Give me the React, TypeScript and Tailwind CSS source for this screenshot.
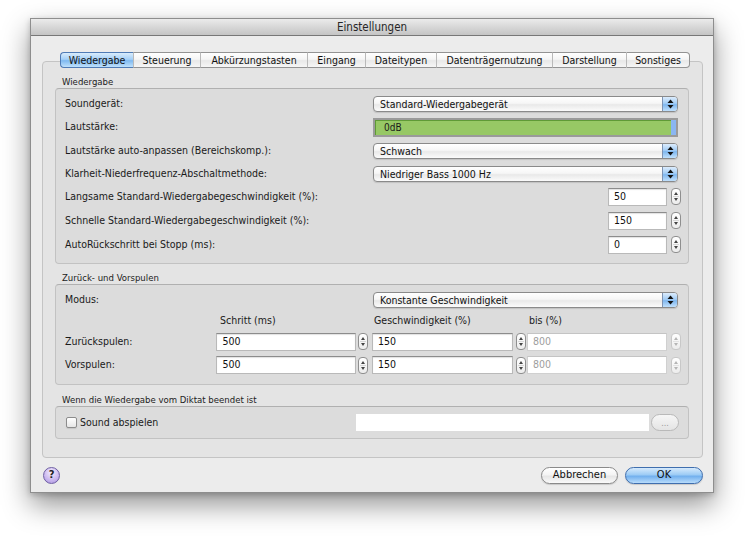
import React from "react";

const FONT = "[font-family:'DejaVu_Sans_Condensed','DejaVu_Sans',sans-serif]";

function PopArrows() {
  return (
    <svg width="7" height="10" viewBox="0 0 7 10">
      <polygon points="3.5,0.5 6.5,4 0.5,4" fill="#111" />
      <polygon points="0.5,6 6.5,6 3.5,9.5" fill="#111" />
    </svg>
  );
}

function Popup({ text }: { text: string }) {
  return (
    <div className="mr-[3px] flex h-[16px] w-[305px] overflow-hidden rounded-[4px] border border-[#8a8a8a] bg-[linear-gradient(to_bottom,#ffffff_0%,#f6f6f6_45%,#e9e9e9_55%,#fbfbfb_100%)] shadow-[0_1px_1px_rgba(0,0,0,0.12)]">
      <div className="flex-1 pl-[6px] text-[10.5px] leading-[14px] text-[#111]">{text}</div>
      <div className="flex w-[15px] items-center justify-center border-l border-[#7d93b3] bg-[linear-gradient(to_bottom,#dcecfc_0%,#a3cdf6_45%,#7fb7ef_55%,#c0e0fc_100%)]">
        <PopArrows />
      </div>
    </div>
  );
}

function Stepper({ disabled = false }: { disabled?: boolean }) {
  const c = disabled ? "#b5b5b5" : "#444";
  return (
    <div
      className={`flex h-[17px] w-[10px] items-center justify-center rounded-[4px] border bg-[linear-gradient(to_bottom,#ffffff,#ececec)] ${
        disabled ? "border-[#c8c8c8]" : "border-[#8f8f8f]"
      }`}
    >
      <svg width="8" height="15" viewBox="0 0 8 15">
        <polygon points="4,3 6,6 2,6" fill={c} />
        <line x1="1" y1="7.5" x2="7" y2="7.5" stroke={disabled ? "#dedede" : "#cfcfcf"} strokeWidth="0.8" />
        <polygon points="2,9 6,9 4,12" fill={c} />
      </svg>
    </div>
  );
}

function Field({ value, w, disabled = false }: { value: string; w: string; disabled?: boolean }) {
  return (
    <div
      className={`flex h-[18px] ${w} items-center border border-[#b9b9b9] border-t-[#8c8c8c] bg-white pl-[5px] text-[10.5px] shadow-[inset_0_1px_1px_rgba(0,0,0,0.12)] ${
        disabled ? "border-[#d0d0d0] border-t-[#c4c4c4] text-[#9d9d9d] shadow-none" : "text-[#111]"
      }`}
    >
      {value}
    </div>
  );
}

function Row({ label, children, h }: { label: string; children: React.ReactNode; h: string }) {
  return (
    <div className={`flex ${h} items-center justify-between`}>
      <div className="text-[10.5px] text-[#1a1a1a]">{label}</div>
      {children}
    </div>
  );
}

function NumRow({ label, value, h }: { label: string; value: string; h: string }) {
  return (
    <Row label={label} h={h}>
      <div className="flex items-center gap-[4px]">
        <Field value={value} w="w-[59px]" />
        <Stepper />
      </div>
    </Row>
  );
}

const tabs: { t: string; w: string }[] = [
  { t: "Wiedergabe", w: "w-[73px]" },
  { t: "Steuerung", w: "w-[67px]" },
  { t: "Abkürzungstasten", w: "w-[107px]" },
  { t: "Eingang", w: "w-[58px]" },
  { t: "Dateitypen", w: "w-[71px]" },
  { t: "Datenträgernutzung", w: "w-[116px]" },
  { t: "Darstellung", w: "w-[74px]" },
  { t: "Sonstiges", w: "w-[64px]" },
];

function SectionLabel({ text }: { text: string }) {
  return <div className="h-[12px] pl-[7px] text-[9.5px] leading-[12px] text-[#222]">{text}</div>;
}

export default function App() {
  return (
    <div className={`h-[536px] w-[745px] bg-white pl-[30px] pt-[18px] ${FONT}`}>
      <div className="flex h-[475px] w-[684px] flex-col border border-[#8e8e8e] bg-[#ececec] shadow-[0_12px_26px_rgba(0,0,0,0.42),0_2px_6px_rgba(0,0,0,0.2)]">
        {/* Title bar */}
        <div className="h-[17px] border-b border-[#777] bg-[linear-gradient(to_bottom,#ebebeb,#c4c4c4)] text-center text-[11.5px] leading-[16px] text-[#262626]">
          Einstellungen
        </div>

        {/* Body */}
        <div className="flex flex-1 flex-col pl-[11px] pr-[10px] pt-[16px]">
          {/* Tabs */}
          <div className="relative z-10 flex h-[16px] pl-[18px]">
            {tabs.map((tab, i) => {
              const sel = i === 0;
              const first = i === 0;
              const last = i === tabs.length - 1;
              return (
                <div
                  key={tab.t}
                  className={`flex ${tab.w} items-center justify-center border-y text-[10.5px] leading-[14px] text-[#111] ${
                    sel
                      ? "border-[#4f7bb5] bg-[linear-gradient(to_bottom,#d9ecfc_0%,#a5d0f7_45%,#7fb9f0_55%,#bfe1fc_100%)]"
                      : "border-[#939393] bg-[linear-gradient(to_bottom,#ffffff_0%,#f5f5f5_45%,#e8e8e8_55%,#f6f6f6_100%)]"
                  } ${first ? "rounded-l-[4px] border-l" : ""} ${last ? "rounded-r-[4px] border-r border-r-[#939393]" : ""} ${
                    !first && !sel ? "border-l border-l-[#b9b9b9]" : ""
                  }`}
                >
                  {tab.t}
                </div>
              );
            })}
          </div>

          {/* Panel */}
          <div className="-mt-[7px] flex h-[397px] flex-col rounded-[4px] border border-[#c4c4c4] bg-[#e4e4e4] pl-[12px] pr-[13px] pt-[14px]">
            <SectionLabel text="Wiedergabe" />
            <div className="flex h-[176px] flex-col rounded-[4px] border border-[#c2c2c2] border-t-[#b0b0b0] bg-[#dcdcdc] pb-[7px] pl-[9px] pr-[7px] pt-[3px]">
              <Row label="Soundgerät:" h="h-[23px]">
                <Popup text="Standard-Wiedergabegerät" />
              </Row>
              <Row label="Lautstärke:" h="h-[24px]">
                <div className="mr-[3px] flex h-[19px] w-[305px] border border-[#9a9a9a] bg-[#9a9a9a] p-[1px]">
                  <div className="flex flex-1 items-center border-l border-t border-[#5f9a36] bg-[#97c865] pl-[8px] text-[10px] text-[#1a1a1a]">
                    0dB
                  </div>
                  <div className="w-[5px] bg-[#8ab6f2]" />
                </div>
              </Row>
              <Row label="Lautstärke auto-anpassen (Bereichskomp.):" h="h-[23px]">
                <Popup text="Schwach" />
              </Row>
              <Row label="Klarheit-Niederfrequenz-Abschaltmethode:" h="h-[23px]">
                <Popup text="Niedriger Bass 1000 Hz" />
              </Row>
              <NumRow label="Langsame Standard-Wiedergabegeschwindigkeit (%):" value="50" h="h-[23px]" />
              <NumRow label="Schnelle Standard-Wiedergabegeschwindigkeit (%):" value="150" h="h-[25px]" />
              <NumRow label="AutoRückschritt bei Stopp (ms):" value="0" h="h-[23px]" />
            </div>

            <div className="mt-[8px]" />
            <SectionLabel text="Zurück- und Vorspulen" />
            <div className="flex h-[101px] flex-col rounded-[4px] border border-[#c2c2c2] border-t-[#b0b0b0] bg-[#dcdcdc] pb-[7px] pl-[9px] pr-[7px] pt-[3px]">
              <div className="flex h-[24px] items-center justify-between">
                <div className="text-[10.5px] text-[#1a1a1a]">Modus:</div>
                <Popup text="Konstante Geschwindigkeit" />
              </div>
              <div className="flex h-[18px] items-center text-[10.5px] text-[#1a1a1a]">
                <div className="w-[152px]" />
                <div className="w-[155px] pl-[3px]">Schritt (ms)</div>
                <div className="w-[155px] pl-[2px]">Geschwindigkeit (%)</div>
                <div className="pl-[2px]">bis (%)</div>
              </div>
              {[
                { l: "Zurückspulen:", h: "h-[23px]" },
                { l: "Vorspulen:", h: "h-[24px]" },
              ].map((r) => (
                <div key={r.l} className={`flex ${r.h} items-center`}>
                  <div className="w-[152px] text-[10.5px] text-[#1a1a1a]">{r.l}</div>
                  <Field value="500" w="w-[140px]" />
                  <div className="ml-[2px]">
                    <Stepper />
                  </div>
                  <div className="ml-[4px]">
                    <Field value="150" w="w-[141px]" />
                  </div>
                  <div className="ml-[3px]">
                    <Stepper />
                  </div>
                  <div className="ml-[1px]">
                    <Field value="800" w="w-[140px]" disabled />
                  </div>
                  <div className="ml-[4px]">
                    <Stepper disabled />
                  </div>
                </div>
              ))}
            </div>

            <div className="mt-[9px]" />
            <SectionLabel text="Wenn die Wiedergabe vom Diktat beendet ist" />
            <div className="flex h-[33px] items-center justify-between rounded-[4px] border border-[#c2c2c2] border-t-[#b0b0b0] bg-[#dcdcdc] pl-[10px] pr-[9px]">
              <div className="flex items-center gap-[3px]">
                <div className="h-[11px] w-[11px] rounded-[2px] border border-[#8c8c8c] bg-[linear-gradient(to_bottom,#ffffff,#e6e6e6)] shadow-[0_1px_1px_rgba(0,0,0,0.1)]" />
                <div className="text-[10.5px] text-[#1a1a1a]">Sound abspielen</div>
              </div>
              <div className="flex items-center gap-[2px]">
                <div className="h-[17px] w-[293px] bg-white" />
                <div className="flex h-[17px] w-[28px] items-center justify-center rounded-full border border-[#b9b9b9] bg-[linear-gradient(to_bottom,#f6f6f6,#e4e4e4)] text-[9px] leading-[10px] text-[#9a9a9a]">
                  ...
                </div>
              </div>
            </div>
          </div>

          {/* Footer */}
          <div className="flex flex-1 items-center justify-between pl-[1px]">
            <div className="flex h-[17px] w-[17px] items-center justify-center rounded-full border border-[#6e5fa3] bg-[radial-gradient(circle_at_50%_30%,#f4eefd,#c9b6ee_60%,#a890dd)] text-[11px] font-bold text-[#222]">
              ?
            </div>
            <div className="flex items-center gap-[7px]">
              <div className="flex h-[17px] w-[77px] items-center justify-center rounded-full border border-[#8a8a8a] bg-[linear-gradient(to_bottom,#ffffff_0%,#f4f4f4_45%,#e6e6e6_55%,#fafafa_100%)] text-[11px] text-[#111] shadow-[0_1px_1px_rgba(0,0,0,0.15)]">
                Abbrechen
              </div>
              <div className="flex h-[17px] w-[78px] items-center justify-center rounded-full border border-[#3f6eae] bg-[linear-gradient(to_bottom,#d6eafc_0%,#9ccbf5_45%,#72b0ee_55%,#b8dcfb_100%)] text-[11px] text-[#111] shadow-[0_1px_1px_rgba(0,0,0,0.15)]">
                OK
              </div>
            </div>
          </div>
        </div>
      </div>
    </div>
  );
}
